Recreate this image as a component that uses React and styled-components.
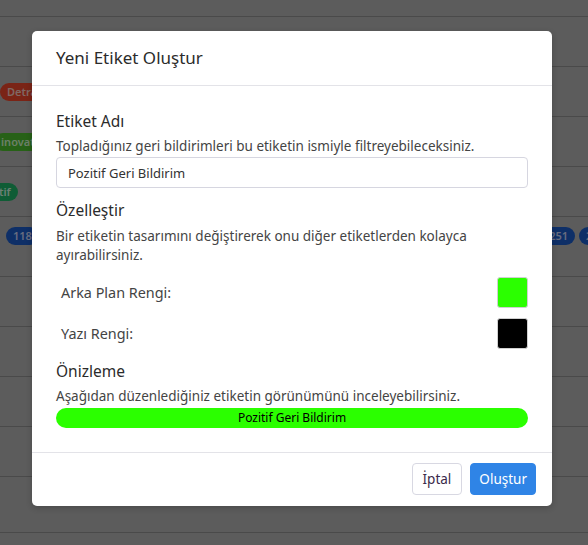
import styled, { createGlobalStyle } from "styled-components";

const GlobalStyle = createGlobalStyle`
	html, body {
		margin: 0;
		padding: 0;
		width: 588px;
		height: 545px;
		overflow: hidden;
		font-family: "Noto Sans", "Liberation Sans", sans-serif;
	}
	* {
		box-sizing: border-box;
	}
`;

const Page = styled.div`
	position: relative;
	width: 588px;
	height: 545px;
	background-color: #b8b8b8;
	overflow: hidden;
`;

const TableRow = styled.div`
	display: flex;
	align-items: ${(props) => (props.top ? "flex-start" : "center")};
	justify-content: space-between;
	height: ${(props) => props.h}px;
	padding-top: ${(props) => (props.top ? 10 : 0)}px;
	border-bottom: 1px solid #959595;
`;

const RowSide = styled.div`
	display: flex;
	gap: 4px;
	${(props) => props.right && "margin-right: -24px;"}
`;

const Badge = styled.span`
	display: inline-block;
	height: 18px;
	line-height: 18px;
	padding: 0 7px;
	border-radius: 9px;
	font-size: 11px;
	font-weight: 600;
	color: ${(props) => props.fg || "#cfd8ff"};
	background-color: ${(props) => props.bg};
	${(props) => props.shift && `margin-left: ${props.shift}px;`}
`;

const Backdrop = styled.div`
	position: absolute;
	inset: 0;
	background-color: rgba(0, 0, 0, 0.5);
	display: flex;
	justify-content: flex-start;
	align-items: flex-start;
	padding: 31px 0 0 32px;
`;

const Modal = styled.div`
	width: 520px;
	background-color: #fff;
	border-radius: 5px;
	box-shadow: 0 2px 6px rgba(0, 0, 0, 0.2);
	color: #333;
`;

const Header = styled.div`
	height: 55px;
	display: flex;
	align-items: center;
	padding: 0 24px 2px 24px;
	border-bottom: 1px solid #e3e3e8;
`;

const Title = styled.h5`
	margin: 0;
	font-size: 17px;
	font-weight: 400;
	color: #2b2b2b;
`;

const Body = styled.div`
	padding: 24px 24px 24px 24px;
`;

const SectionTitle = styled.h6`
	margin: ${(props) => props.mt || 0}px 0 0 0;
	font-size: 15.5px;
	line-height: 22px;
	font-weight: 400;
	color: #2b2b2b;
`;

const Description = styled.p`
	margin: ${(props) => props.mt || 5}px 0 0 0;
	font-size: 13.5px;
	line-height: 19px;
	color: #444;
`;

const Input = styled.input`
	display: block;
	margin-top: 1px;
	width: 100%;
	height: 31px;
	padding: 0 11px;
	border: 1px solid #d6d6e0;
	border-radius: 4px;
	font-family: inherit;
	font-size: 13px;
	color: #333;
	outline: none;
`;

const ColorRow = styled.div`
	display: flex;
	align-items: center;
	justify-content: space-between;
	margin-top: ${(props) => props.mt}px;
	padding-left: 5px;
`;

const ColorLabel = styled.span`
	font-size: 14.4px;
	color: #444;
`;

const Swatch = styled.div`
	width: 31px;
	height: 31px;
	border-radius: 3px;
	border: 1px solid #d0d0d0;
	background-color: ${(props) => props.color};
`;

const Preview = styled.div`
	margin-top: 2px;
	height: 20px;
	border-radius: 10px;
	background-color: ${(props) => props.bg};
	color: ${(props) => props.fg};
	font-size: 12px;
	line-height: 20px;
	text-align: center;
`;

const Footer = styled.div`
	display: flex;
	justify-content: flex-end;
	gap: 8px;
	padding: 10px 16px 11px 16px;
	border-top: 1px solid #e3e3e8;
`;

const Button = styled.button`
	height: 32px;
	padding: 0 ${(props) => (props.primary ? 8 : 10)}px;
	border-radius: 4px;
	font-family: inherit;
	font-size: 13.5px;
	border: 1px solid ${(props) => (props.primary ? "#2f84e6" : "#d8d8e2")};
	background-color: ${(props) => (props.primary ? "#2f84e6" : "#fff")};
	color: ${(props) => (props.primary ? "#fff" : "#3a2a4a")};
	cursor: pointer;
`;

const rows = [17, 50, 50, 50, 50, 60, 50, 50, 50, 50, 56];

const App = () => {
	return (
		<>
			<GlobalStyle />
			<Page>
				{rows.map((h, i) => (
					<TableRow key={i} h={h} top={i === 5}>
						<RowSide>
							{i === 2 && <Badge bg="#f5482c" fg="#ffd0c8">Detractor</Badge>}
							{i === 3 && (
								<Badge bg="#4fc22f" fg="#d8ffd0" shift={-6}>
									inovation
								</Badge>
							)}
							{i === 4 && (
								<Badge bg="#1fb86a" fg="#d8ffe8" shift={-8}>
									tif
								</Badge>
							)}
							{i === 5 && (
								<Badge bg="#1d5fcf" shift={6}>
									118
								</Badge>
							)}
						</RowSide>
						<RowSide right>
							{i === 5 && (
								<>
									<Badge bg="#1d5fcf">251</Badge>
									<Badge bg="#1d5fcf">248</Badge>
								</>
							)}
						</RowSide>
					</TableRow>
				))}
				<Backdrop>
					<Modal>
						<Header>
							<Title>Yeni Etiket Oluştur</Title>
						</Header>
						<Body>
							<SectionTitle>Etiket Adı</SectionTitle>
							<Description>
								Topladığınız geri bildirimleri bu etiketin ismiyle filtreyebileceksiniz.
							</Description>
							<Input defaultValue="Pozitif Geri Bildirim" />
							<SectionTitle mt={11}>Özelleştir</SectionTitle>
							<Description mt={6}>
								Bir etiketin tasarımını değiştirerek onu diğer etiketlerden kolayca
								ayırabilirsiniz.
							</Description>
							<ColorRow mt={12}>
								<ColorLabel>Arka Plan Rengi:</ColorLabel>
								<Swatch color="#2bff00" />
							</ColorRow>
							<ColorRow mt={10}>
								<ColorLabel>Yazı Rengi:</ColorLabel>
								<Swatch color="#000" />
							</ColorRow>
							<SectionTitle mt={11}>Önizleme</SectionTitle>
							<Description>
								Aşağıdan düzenlediğiniz etiketin görünümünü inceleyebilirsiniz.
							</Description>
							<Preview bg="#2bff00" fg="#000">
								Pozitif Geri Bildirim
							</Preview>
						</Body>
						<Footer>
							<Button>İptal</Button>
							<Button primary>Oluştur</Button>
						</Footer>
					</Modal>
				</Backdrop>
			</Page>
		</>
	);
};

export default App;
